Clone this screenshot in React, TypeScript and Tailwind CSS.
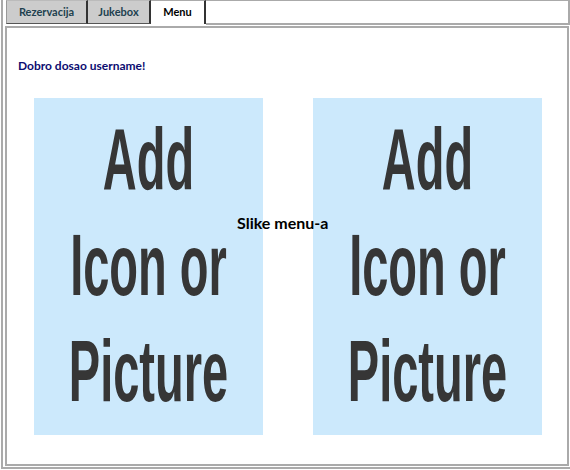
import React from "react";

const tabs = [
  { label: "Rezervacija", width: "w-[82px]", active: false },
  { label: "Jukebox", width: "w-[63px]", active: false },
  { label: "Menu", width: "w-[55px]", active: true },
];

function Placeholder() {
  return (
    <div className="w-[229px] h-[337px] bg-[#cce9fc] pt-[7px] font-['Liberation_Sans',Arial,sans-serif] font-bold text-[47px] text-[#363636] leading-none">
      {["Add", "Icon or", "Picture"].map((line) => (
        <div key={line} className="h-[106px] flex items-center justify-center">
          <span className="inline-block scale-y-[1.85] whitespace-pre blur-[0.4px]">{line}</span>
        </div>
      ))}
    </div>
  );
}

export default function App() {
  return (
    <div className="w-[570px] h-[470px] bg-white pl-px font-['Lato',sans-serif]">
      <div className="h-[469px] border-l-2 border-b-2 border-[#aaaaaa]">
        {/* tabovi */}
        <div className="flex h-[25px] pl-[3px]">
          {tabs.map((t) => (
            <div
              key={t.label}
              className={`${t.width} h-[24px] flex items-center justify-center text-[11px] font-bold border-r-2 border-[#333333] ${
                t.active
                  ? "bg-white text-black border-t border-t-[#aaaaaa]"
                  : "bg-[#cccccc] text-[#21414f] border-t border-t-[#bbbbbb] border-b border-b-[#555555]"
              } ${t.label === "Rezervacija" ? "border-l border-l-[#999999]" : ""}`}
            >
              {t.label}
            </div>
          ))}
          <div className="flex-1 h-[25px] border-t border-b-2 border-r-2 border-[#aaaaaa]" />
        </div>

        {/* panel */}
        <div className="ml-[2px] mt-px w-[564px] h-[440px] border-2 border-[#aaaaaa] pl-[11px] pt-[30px]">
          <p className="text-[12px] leading-[15px] font-bold text-[#0c0c70]">Dobro dosao username!</p>
          <div className="relative flex gap-[50px] mt-[25px] ml-[16px]">
            <Placeholder />
            <Placeholder />
            <span className="absolute left-[203px] top-[115px] text-[16px] leading-[20px] font-bold text-black">
              Slike menu-a
            </span>
          </div>
        </div>
      </div>
    </div>
  );
}
